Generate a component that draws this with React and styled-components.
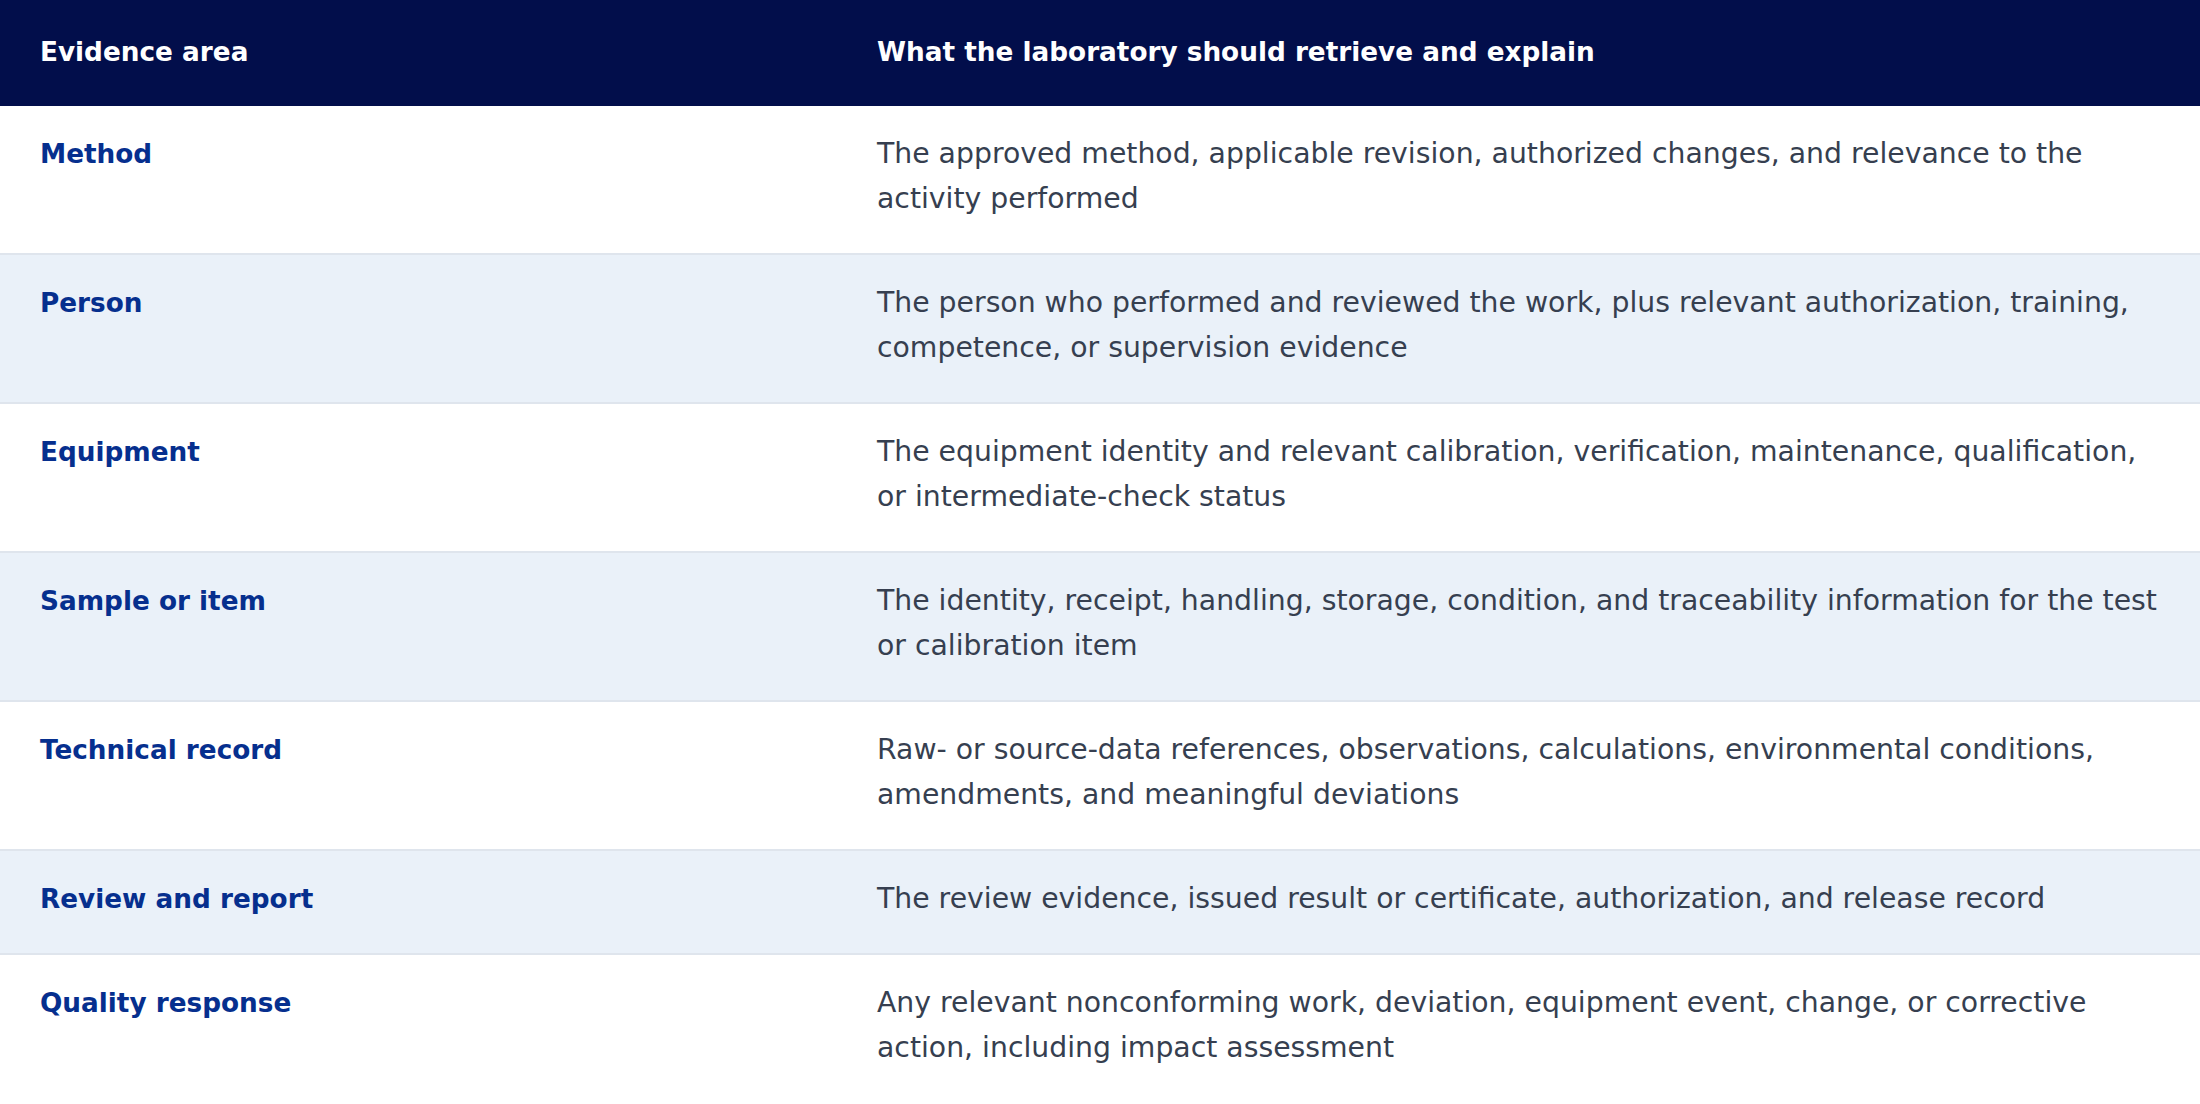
import React from 'react';
import styled, { createGlobalStyle } from 'styled-components';

const GlobalStyle = createGlobalStyle`
  body {
    margin: 0;
    background: #ffffff;
    font-family: "DejaVu Sans", "Noto Sans", sans-serif;
  }
`;

const rows = [
  {
    area: 'Method',
    detail: 'The approved method, applicable revision, authorized changes, and relevance to the activity performed'
  },
  {
    area: 'Person',
    detail: 'The person who performed and reviewed the work, plus relevant authorization, training, competence, or supervision evidence'
  },
  {
    area: 'Equipment',
    detail: 'The equipment identity and relevant calibration, verification, maintenance, qualification, or intermediate-check status'
  },
  {
    area: 'Sample or item',
    detail: 'The identity, receipt, handling, storage, condition, and traceability information for the test or calibration item'
  },
  {
    area: 'Technical record',
    detail: 'Raw- or source-data references, observations, calculations, environmental conditions, amendments, and meaningful deviations'
  },
  {
    area: 'Review and report',
    detail: 'The review evidence, issued result or certificate, authorization, and release record'
  },
  {
    area: 'Quality response',
    detail: 'Any relevant nonconforming work, deviation, equipment event, change, or corrective action, including impact assessment'
  }
];

export default function App() {
  return (
    <>
      <GlobalStyle />
      <Table>
        <colgroup>
          <AreaCol />
          <col />
        </colgroup>
        <thead>
          <tr>
            <HeadCell>Evidence area</HeadCell>
            <HeadCell>What the laboratory should retrieve and explain</HeadCell>
          </tr>
        </thead>
        <tbody>
          {rows.map((row, i) => (
            <Row key={row.area} striped={i % 2 === 1} last={i === rows.length - 1}>
              <AreaCell>{row.area}</AreaCell>
              <DetailCell>{row.detail}</DetailCell>
            </Row>
          ))}
        </tbody>
      </Table>
    </>
  );
}

const Table = styled.table`
  width: 100%;
  border-collapse: collapse;
  table-layout: fixed;
`;

const AreaCol = styled.col`
  width: 837px;
`;

const HeadCell = styled.th`
  background: #020e4b;
  color: #ffffff;
  text-align: left;
  font-weight: 700;
  font-size: 26.3px;
  line-height: 44.8px;
  padding: 30px 40px 31.2px;
`;

const Row = styled.tr.withConfig({
  shouldForwardProp: prop => !['striped', 'last'].includes(prop)
})`
  background: ${p => (p.striped ? '#eaf1f9' : '#ffffff')};
  border-bottom: ${p => (p.last ? 'none' : '2px solid #dfe5ed')};
`;

const Cell = styled.td`
  vertical-align: top;
  padding: 26px 40px 31.4px;
`;

const AreaCell = styled(Cell)`
  color: #062f8e;
  font-weight: 700;
  font-size: 26.3px;
  line-height: 44.8px;
`;

const DetailCell = styled(Cell)`
  color: #363f50;
  font-size: 28.3px;
  line-height: 44.8px;
  padding-right: 28px;
`;
